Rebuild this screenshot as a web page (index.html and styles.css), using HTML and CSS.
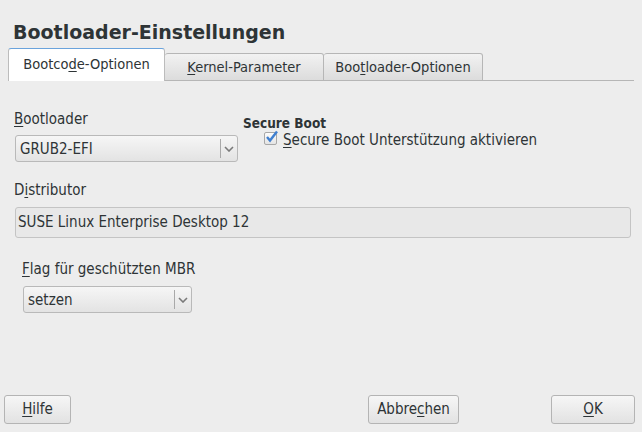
FILE: index.html
```html
<!DOCTYPE html>
<html>
<head>
<meta charset="utf-8">
<link rel="stylesheet" href="styles.css">
</head>
<body>
<div class="dialog">
  <h1 class="title">Bootloader-Einstellungen</h1>
  <div class="tabs">
    <div class="tab active">Bootco<u>d</u>e-Optionen</div>
    <div class="tab"><u>K</u>ernel-Parameter</div>
    <div class="tab">Boo<u>t</u>loader-Optionen</div>
    <div class="tab-fill"></div>
  </div>
  <div class="content">
    <div class="row1">
      <div class="field boot">
        <div class="label"><u>B</u>ootloader</div>
        <div class="combo wide"><span class="val">GRUB2-EFI</span><span class="arrow"><svg width="10" height="6" viewBox="0 0 10 6"><path d="M1 1 L5 5 L9 1" fill="none" stroke="#7a7a7a" stroke-width="1.6"/></svg></span></div>
      </div>
      <div class="secure">
        <div class="sb-title">Secure Boot</div>
        <div class="check-row">
          <span class="checkbox"><svg width="13" height="13" viewBox="0 0 13 13"><path d="M2 7 L5 10.5 L12 1.5" fill="none" stroke="#3f7fd0" stroke-width="2.4"/></svg></span>
          <span><u>S</u>ecure Boot Unterstützung aktivieren</span>
        </div>
      </div>
    </div>
    <div class="label dist">D<u>i</u>stributor</div>
    <div class="textfield">SUSE Linux Enterprise Desktop 12</div>
    <div class="flag">
      <div class="label"><u>F</u>lag für geschützten MBR</div>
      <div class="combo narrow"><span class="val">setzen</span><span class="arrow"><svg width="10" height="6" viewBox="0 0 10 6"><path d="M1 1 L5 5 L9 1" fill="none" stroke="#7a7a7a" stroke-width="1.6"/></svg></span></div>
    </div>
  </div>
  <div class="buttons">
    <div class="btn help"><u>H</u>ilfe</div>
    <div class="spacer"></div>
    <div class="btn cancel">Abbre<u>c</u>hen</div>
    <div class="btn ok"><u>O</u>K</div>
  </div>
</div>
</body>
</html>
```
FILE: styles.css
```css
html, body {
  margin: 0;
  padding: 0;
  background: #ededed;
  font-family: "DejaVu Sans Condensed", "DejaVu Sans", sans-serif;
  font-stretch: condensed;
  color: #2e3436;
}
u { text-decoration: underline; text-underline-offset: 2px; }
.dialog {
  width: 642px;
  height: 432px;
  display: flex;
  flex-direction: column;
  box-sizing: border-box;
}
.title {
  margin: 0;
  padding: 19px 0 0 13px;
  font-family: "DejaVu Sans", sans-serif;
  font-stretch: normal;
  font-size: 19px;
  font-weight: bold;
  line-height: 26px;
  height: 29px;
  color: #2e3436;
}
.tabs {
  display: flex;
  align-items: flex-end;
  margin: 0 8px;
  height: 33px;
}
.tab {
  box-sizing: border-box;
  height: 28px;
  width: 157px;
  border: 1px solid #b6b6b6;
  border-radius: 3px 3px 0 0;
  background: linear-gradient(#f2f2f2, #dcdcdc);
  font-size: 14.5px;
  line-height: 26px;
  text-align: center;
  color: #2e3436;
}
.tab + .tab { border-left: none; width: 159px; }
.tab.active {
  height: 33px;
  background: #ffffff;
  border-color: #bcbcbc;
  border-top: 1px solid #6aa3dc;
  border-bottom: none;
  line-height: 30px;
  padding-bottom: 1px;
}
.tab-fill {
  flex: 1;
  border-bottom: 1px solid #b6b6b6;
}
.content {
  padding: 0 11px 0 15px;
  flex: 1;
}
.row1 {
  display: flex;
  margin-top: 30px;
}
.label {
  font-size: 15px;
  line-height: 17px;
  margin-left: -1px;
}
.combo {
  box-sizing: border-box;
  height: 27px;
  margin-top: 7px;
  border: 1px solid #b9b9b9;
  border-radius: 3px;
  background: linear-gradient(#f6f6f6, #e3e3e3);
  display: flex;
  align-items: center;
  font-size: 15px;
}
.combo .val { flex: 1; padding-left: 4px; }
.combo .arrow {
  width: 16px;
  height: 19px;
  border-left: 1px solid #a9a9a9;
  display: flex;
  align-items: center;
  justify-content: center;
}
.wide { width: 223px; }
.narrow { width: 169px; margin-top: 8px; }
.secure {
  margin-left: 5px;
  margin-top: 5px;
}
.sb-title {
  font-size: 13.5px;
  font-weight: bold;
  line-height: 15px;
}
.check-row {
  display: flex;
  align-items: center;
  margin-left: 21px;
  font-size: 15px;
  line-height: 18px;
  gap: 6px;
}
.checkbox {
  width: 11px;
  height: 11px;
  border: 1px solid #a8a8a8;
  border-radius: 2px;
  background: linear-gradient(#fcfcfc, #e4e4e4);
  position: relative;
  margin-top: -4px;
}
.checkbox svg { position: absolute; left: 0; top: -3px; }
.dist { margin-top: 20px; }
.textfield {
  box-sizing: border-box;
  margin-top: 8px;
  height: 31px;
  border: 1px solid #c4c4c4;
  border-radius: 3px;
  background: #e8e8e8;
  font-size: 15px;
  line-height: 29px;
  padding-left: 2px;
}
.flag {
  margin-top: 23px;
  margin-left: 8px;
}
.buttons {
  display: flex;
  padding: 0 7px 8px 4px;
}
.spacer { flex: 1; }
.btn {
  box-sizing: border-box;
  height: 29px;
  border: 1px solid #b4b4b4;
  border-radius: 3px;
  background: linear-gradient(#f6f6f6, #e2e2e2);
  font-size: 15px;
  line-height: 27px;
  text-align: center;
}
.help { width: 67px; }
.cancel { width: 91px; margin-right: 92px; }
.ok { width: 84px; }
```
